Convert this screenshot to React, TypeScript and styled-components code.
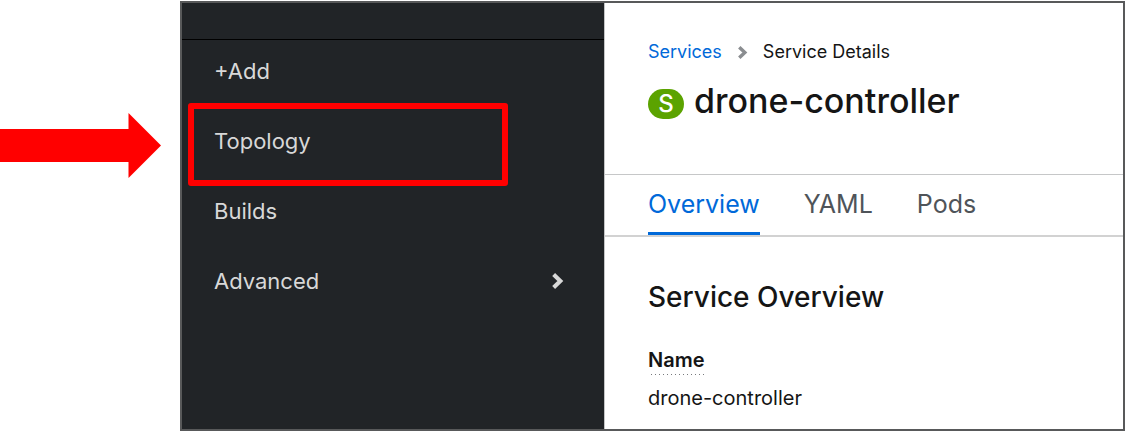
import React from "react";
import styled, { createGlobalStyle } from "styled-components";

const GlobalStyle = createGlobalStyle`
  * { box-sizing: border-box; }
  body {
    margin: 0;
    background: #fff;
    color: #151515;
    font-family: Inter, "Open Sans", "Liberation Sans", sans-serif;
  }
`;

const Page = styled.div`
  display: flex;
  min-height: 100vh;
  padding: 1px 1px 1px 0;
`;

const Pointer = styled.div`
  flex: 0 0 180px;
  padding-top: 111px;

  svg { display: block; }
`;

const Console = styled.div`
  flex: 1;
  min-width: 0;
  display: flex;
  border: 2px solid #58595a;
`;

const Sidebar = styled.aside`
  flex: 0 0 422px;
  background: #212427;
`;

const SidebarHeader = styled.div`
  height: 37px;
  border-bottom: 1px solid #000;
`;

const NavList = styled.ul`
  list-style: none;
  margin: 0;
  padding: 8px 0;
  display: flex;
  flex-direction: column;
  gap: 24px;
`;

const NavItem = styled.li`
  position: relative;
`;

const NavLink = styled.a`
  display: flex;
  align-items: center;
  justify-content: space-between;
  height: 46px;
  padding: 0 40px 0 32px;
  color: #d8d8d8;
  font-size: 22px;
  line-height: 32px;
  text-decoration: none;
`;

const Highlight = styled.span`
  position: absolute;
  top: -15px;
  bottom: -22px;
  left: 6px;
  width: 320px;
  border: 6px solid #f00;
  border-radius: 3px;
  pointer-events: none;
`;

const Main = styled.main`
  flex: 1;
  min-width: 0;
  border-left: 1px solid #c4c5c6;
`;

const Header = styled.header`
  padding: 35px 43px 51px;
`;

const Breadcrumb = styled.nav`
  display: flex;
  align-items: center;
  font-size: 18px;
  line-height: 28px;

  svg { margin: 0 15px; }
`;

const CrumbLink = styled.a`
  color: #0069d9;
  text-decoration: none;
`;

const Title = styled.h1`
  display: flex;
  align-items: center;
  gap: 10px;
  margin: 12px 0 0;
  font-size: 34px;
  font-weight: 500;
  line-height: 45px;
`;

const Badge = styled.span`
  width: 36px;
  height: 30px;
  border-radius: 15px;
  background: #5ba300;
  color: #fff;
  font-size: 24px;
  line-height: 30px;
  text-align: center;
  margin-top: 6px;
`;

const Tabs = styled.nav`
  display: flex;
  gap: 44px;
  height: 63px;
  padding: 0 43px;
  border-top: 1px solid #c6c7c8;
  border-bottom: 2px solid #d2d2d2;
`;

const Tab = styled.a<{ $active?: boolean }>`
  border-bottom: 3px solid ${(p) => (p.$active ? "#0069d9" : "transparent")};
  color: ${(p) => (p.$active ? "#0069d9" : "#4f5459")};
  font-size: 25px;
  line-height: 59px;
  text-decoration: none;
`;

const Section = styled.section`
  padding: 40px 43px 16px;
`;

const SectionTitle = styled.h2`
  margin: 0;
  font-size: 28px;
  font-weight: 500;
  line-height: 40px;
`;

const Details = styled.dl`
  margin: 28px 0 0;
  font-size: 20px;
  line-height: 30px;
`;

const Term = styled.dt`
  font-weight: 600;

  span {
    display: inline-block;
    background: repeating-linear-gradient(to right, transparent 0 3px, #77797c 3px 4px)
      bottom / 100% 1px no-repeat;
  }
`;

const Value = styled.dd`
  margin: 8px 0 0;
`;

const NAV = ["+Add", "Topology", "Builds", "Advanced"];
const TABS = ["Overview", "YAML", "Pods"];

function Chevron({ width, height, color }: { width: number; height: number; color: string }) {
  return (
    <svg width={width} height={height} viewBox="0 0 10 14" aria-hidden="true">
      <path d="M2 2L7.2 7L2 12" fill="none" stroke={color} strokeWidth="3.2" />
    </svg>
  );
}

export default function App() {
  return (
    <>
      <GlobalStyle />
      <Page>
        <Pointer>
          <svg width="161" height="66" viewBox="0 0 161 66" aria-hidden="true">
            <path d="M0 17H128.500V1L161 33.500L128.500 66V50H0Z" fill="#f00" />
          </svg>
        </Pointer>
        <Console>
          <Sidebar>
            <SidebarHeader />
            <nav aria-label="Main">
              <NavList>
                {NAV.map((label) => (
                  <NavItem key={label}>
                    <NavLink href="#">
                      {label}
                      {label === "Advanced" && <Chevron width={13} height={18} color="#d8d8d8" />}
                    </NavLink>
                    {label === "Topology" && <Highlight />}
                  </NavItem>
                ))}
              </NavList>
            </nav>
          </Sidebar>
          <Main>
            <Header>
              <Breadcrumb aria-label="Breadcrumb">
                <CrumbLink href="#">Services</CrumbLink>
                <Chevron width={11} height={15} color="#8a8d90" />
                <span>Service Details</span>
              </Breadcrumb>
              <Title>
                <Badge>S</Badge>
                drone-controller
              </Title>
            </Header>
            <Tabs aria-label="Service views">
              {TABS.map((label) => (
                <Tab key={label} href="#" $active={label === "Overview"}>
                  {label}
                </Tab>
              ))}
            </Tabs>
            <Section>
              <SectionTitle>Service Overview</SectionTitle>
              <Details>
                <Term>
                  <span>Name</span>
                </Term>
                <Value>drone-controller</Value>
              </Details>
            </Section>
          </Main>
        </Console>
      </Page>
    </>
  );
}
